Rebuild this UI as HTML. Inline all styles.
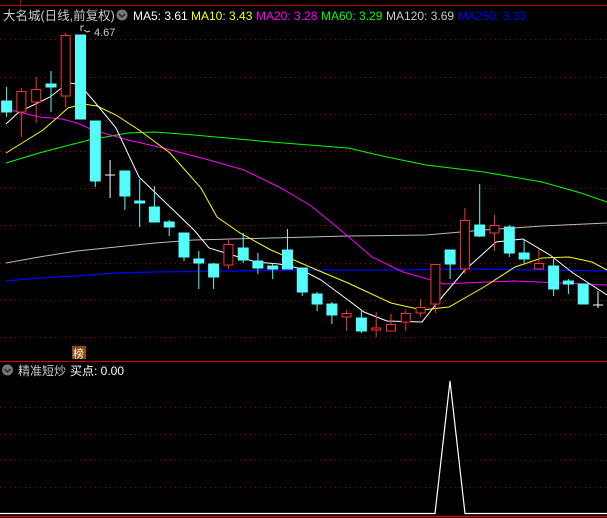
<!DOCTYPE html>
<html><head><meta charset="utf-8"><style>
html,body{margin:0;padding:0;background:#000;width:607px;height:518px;overflow:hidden}
svg{display:block}
text{font-family:"Liberation Sans","Noto Sans CJK SC",sans-serif}
</style></head><body>
<svg width="607" height="518" viewBox="0 0 607 518" xmlns="http://www.w3.org/2000/svg">
<rect width="607" height="518" fill="#000"/>
<line x1="0" y1="5.5" x2="607" y2="5.5" stroke="#b00" stroke-width="1"/>
<line x1="20.5" y1="0" x2="20.5" y2="5" stroke="#b00"/>
<g stroke="#a00" stroke-width="1" stroke-dasharray="1,4">
<line x1="0" y1="39.5" x2="607" y2="39.5"/><line x1="0" y1="77.5" x2="607" y2="77.5"/><line x1="0" y1="114.5" x2="607" y2="114.5"/><line x1="0" y1="151.5" x2="607" y2="151.5"/><line x1="0" y1="188.5" x2="607" y2="188.5"/><line x1="0" y1="225.5" x2="607" y2="225.5"/><line x1="0" y1="263.5" x2="607" y2="263.5"/><line x1="0" y1="300.5" x2="607" y2="300.5"/><line x1="0" y1="337.5" x2="607" y2="337.5"/>
<line x1="0" y1="407.5" x2="607" y2="407.5"/><line x1="0" y1="434.5" x2="607" y2="434.5"/><line x1="0" y1="460.5" x2="607" y2="460.5"/><line x1="0" y1="487.5" x2="607" y2="487.5"/>
</g>
<text x="3" y="20" font-size="12.5" fill="#ccc">大名城(日线,前复权)</text>
<circle cx="122" cy="15" r="5.5" fill="#777"/><path d="M119 14l3 3 3-3" stroke="#222" stroke-width="1.5" fill="none"/>
<text y="20" font-size="12"><tspan x="133" fill="#fff">MA5: 3.61</tspan><tspan x="191" fill="#ff0">MA10: 3.43</tspan><tspan x="256" fill="#f0f">MA20: 3.28</tspan><tspan x="321" fill="#0f0">MA60: 3.29</tspan><tspan x="386" fill="#ccc">MA120: 3.69</tspan><tspan x="458" fill="#00f">MA250: 3.33</tspan></text>
<text x="94" y="36" font-size="11" fill="#ccc">4.67</text>
<path d="M81 31v-5h3M84 30l3 2 3-1" stroke="#ccc" fill="none" stroke-width="1"/>
<g fill="none" stroke-width="1">
<polyline stroke="#0f0" points="6,163 39,153 89,140 128,133 155,132 194,135 271,142 348,148 387,157 426,165 484,172 542,182 581,193 607,202"/>
<polyline stroke="#bbb" points="6,263 39,257 77,251 116,247 155,243 194,240 271,238 348,236 426,235 484,230 542,226 607,223"/>
<polyline stroke="#00f" stroke-width="1.3" points="6,281 39,278 77,276 116,273 155,272 232,271 310,270 387,270 465,269 542,270 607,271"/>
<polyline stroke="#f0f" points="6,109 23,113 39,117 62,119 77,123 93,130 128,140 163,148 209,160 244,170 279,187 310,205 337,227 356,243 372,257 403,272 445,284 484,282 515,281 561,283 607,285"/>
<polyline stroke="#ff0" points="6,153 43,130 58,117 68,108 83,104 97,106 116,115 139,130 170,153 201,188 217,217 240,233 271,250 310,267 348,283 391,303 422,310 449,307 484,287 515,267 542,258 569,257 592,262 607,270"/>
<polyline stroke="#fff" points="6,124 19,112 50,97 68,83 79,84 93,100 116,128 139,177 166,203 194,230 209,248 232,255 256,262 279,264 298,268 321,280 348,300 364,312 387,321 422,322 437,303 465,270 496,242 523,239 550,255 573,273 607,295"/>
</g>
<g stroke="#54fcfc" fill="#54fcfc" stroke-width="1">
<line x1="6.6" y1="87" x2="6.6" y2="117"/><rect x="1.6" y="101" width="10" height="11"/>
<line x1="51" y1="71" x2="51" y2="112"/><rect x="46" y="84" width="10" height="3"/>
<rect x="75.5" y="35" width="10" height="84"/>
<line x1="95.3" y1="121" x2="95.3" y2="187"/><rect x="90.3" y="121" width="10" height="60"/>
<line x1="124.9" y1="171" x2="124.9" y2="210"/><rect x="119.9" y="171" width="10" height="25"/>
<line x1="139.7" y1="179" x2="139.7" y2="227"/><rect x="134.7" y="201" width="10" height="2"/>
<line x1="154.4" y1="186" x2="154.4" y2="222"/><rect x="149.4" y="207" width="10" height="15"/>
<line x1="169.2" y1="220" x2="169.2" y2="236"/><rect x="164.2" y="222" width="10" height="5"/>
<line x1="184" y1="233" x2="184" y2="261"/><rect x="179" y="233" width="10" height="24"/>
<line x1="198.8" y1="251" x2="198.8" y2="289"/><rect x="193.8" y="259" width="10" height="4"/>
<line x1="213.6" y1="263" x2="213.6" y2="289"/><rect x="208.6" y="264" width="10" height="13"/>
<line x1="243.2" y1="233" x2="243.2" y2="263"/><rect x="238.2" y="248" width="10" height="12"/>
<line x1="257.9" y1="253" x2="257.9" y2="274"/><rect x="252.9" y="261" width="10" height="7"/>
<line x1="272.7" y1="263" x2="272.7" y2="279"/><rect x="267.7" y="266" width="10" height="3"/>
<line x1="287.5" y1="229" x2="287.5" y2="269"/><rect x="282.5" y="250" width="10" height="19"/>
<line x1="302.3" y1="268" x2="302.3" y2="296"/><rect x="297.3" y="268" width="10" height="24"/>
<line x1="317.1" y1="292" x2="317.1" y2="311"/><rect x="312.1" y="294" width="10" height="10"/>
<line x1="331.9" y1="302" x2="331.9" y2="324"/><rect x="326.9" y="304" width="10" height="11"/>
<line x1="361.4" y1="310" x2="361.4" y2="333"/><rect x="356.4" y="318" width="10" height="13"/>
<line x1="450.1" y1="250" x2="450.1" y2="279"/><rect x="445.1" y="250" width="10" height="14"/>
<line x1="479.7" y1="184" x2="479.7" y2="237"/><rect x="474.7" y="225" width="10" height="11"/>
<line x1="509.3" y1="225" x2="509.3" y2="257"/><rect x="504.3" y="227" width="10" height="26"/>
<line x1="524.1" y1="240" x2="524.1" y2="263"/><rect x="519.1" y="253" width="10" height="6"/>
<line x1="553.6" y1="259" x2="553.6" y2="296"/><rect x="548.6" y="266" width="10" height="23"/>
<line x1="568.4" y1="279" x2="568.4" y2="294"/><rect x="563.4" y="281" width="10" height="3"/>
<rect x="578.2" y="284" width="10" height="20"/>
</g>
<g stroke="#ff3232" fill="none" stroke-width="1">
<path d="M21.4 88v3M21.4 112v25"/><rect x="16.9" y="91.5" width="9" height="20.5" fill="#000"/>
<path d="M36.2 77v12M36.2 102v21"/><rect x="31.7" y="89.5" width="9" height="12.5" fill="#000"/>
<path d="M65.7 33v2M65.7 96v11"/><rect x="61.2" y="35.5" width="9" height="60.5" fill="#000"/>
<path d="M228.4 239v5M228.4 265v4"/><rect x="223.9" y="244.5" width="9" height="20.5" fill="#000"/>
<path d="M346.6 310v3M346.6 317v14"/><rect x="342.1" y="313.5" width="9" height="3.5" fill="#000"/>
<path d="M376.2 312v16M376.2 330v7"/><rect x="371.7" y="328" width="9" height="2" fill="#000"/>
<path d="M391 314v10"/><rect x="386.5" y="324.5" width="9" height="6.5" fill="#000"/>
<path d="M405.8 310v3M405.8 322v9"/><rect x="401.3" y="313.5" width="9" height="8.5" fill="#000"/>
<path d="M420.6 299v8M420.6 313v4"/><rect x="416.1" y="307.5" width="9" height="5.5" fill="#000"/>
<path d="M435.4 304v9"/><rect x="430.9" y="264.5" width="9" height="39.5" fill="#000"/>
<path d="M464.9 208v12M464.9 269v5"/><rect x="460.4" y="220.5" width="9" height="48.5" fill="#000"/>
<path d="M494.5 215v10M494.5 233v18"/><rect x="490" y="225.5" width="9" height="7.5" fill="#000"/>
<path d="M538.9 249v14"/><rect x="534.4" y="263.5" width="9" height="5.5" fill="#000"/>
</g>
<g stroke="#fff" stroke-width="1">
<path d="M110.1 160v38M105.1 175h10"/>
<path d="M598 291v17M593 305h10"/>
</g>
<rect x="72" y="346" width="14" height="13" fill="#8a4a0a"/>
<text x="73" y="357.5" font-size="11" fill="#fff">榜</text>
<line x1="0" y1="361.5" x2="607" y2="361.5" stroke="#c00" stroke-width="1"/>
<circle cx="7.5" cy="370" r="5.5" fill="#777"/><path d="M4.5 369l3 3 3-3" stroke="#222" stroke-width="1.5" fill="none"/>
<text x="18" y="375" font-size="12" fill="#ccc">精准短炒</text>
<text x="70" y="375" font-size="12" fill="#fff">买点: 0.00</text>
<polyline fill="none" stroke="#fff" stroke-width="1.2" points="0,513.5 435,513.5 450,381 465,513.5 607,513.5"/>
<line x1="0" y1="516.5" x2="607" y2="516.5" stroke="#d00" stroke-width="1.5"/>
</svg>
</body></html>
